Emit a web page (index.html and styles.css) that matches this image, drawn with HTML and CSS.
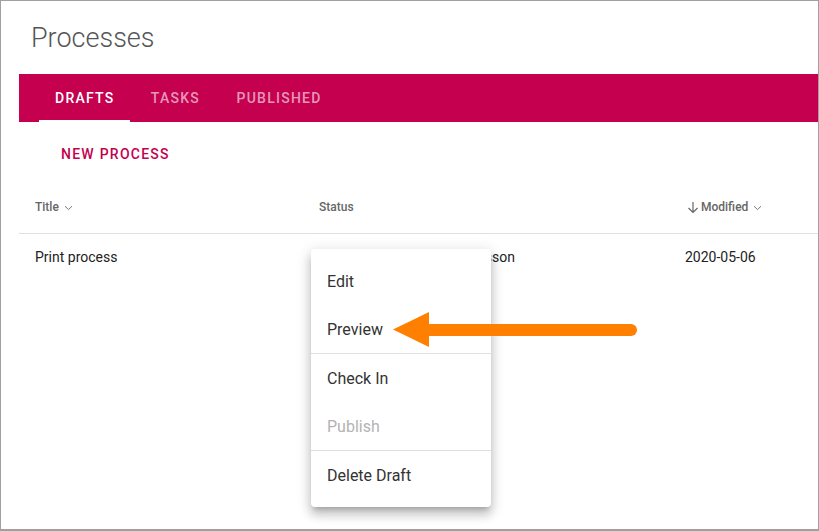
FILE: index.html
```html
<!DOCTYPE html>
<html>
<head>
<meta charset="utf-8">
<link rel="stylesheet" href="styles.css">
</head>
<body>
<div class="frame">
  <h1 class="page-title">Processes</h1>
  <nav class="tabs">
    <div class="tab active">DRAFTS</div>
    <div class="tab">TASKS</div>
    <div class="tab">PUBLISHED</div>
  </nav>
  <div class="toolbar">
    <button class="new-btn">NEW PROCESS</button>
  </div>
  <div class="table">
    <div class="row head">
      <div class="cell">Title <svg class="chev" width="9" height="6" viewBox="0 0 9 6"><path d="M1 1.2 L4.5 4.6 L8 1.2" fill="none" stroke="#777" stroke-width="1"/></svg></div>
      <div class="cell">Status</div>
      <div class="cell"></div>
      <div class="cell"></div>
      <div class="cell modified"><svg class="down" width="12" height="13" viewBox="0 0 12 13"><path d="M6 1 V11.5 M1.5 7 L6 11.5 L10.5 7" fill="none" stroke="#666" stroke-width="1.2"/></svg>Modified <svg class="chev" width="9" height="6" viewBox="0 0 9 6"><path d="M1 1.2 L4.5 4.6 L8 1.2" fill="none" stroke="#777" stroke-width="1"/></svg></div>
    </div>
    <div class="row data">
      <div class="cell">Print process</div>
      <div class="cell">Checked out</div>
      <div class="cell owner">Larsson</div>
      <div class="cell"></div>
      <div class="cell date">2020-05-06</div>
    </div>
  </div>

  <div class="menu">
    <div class="item">Edit</div>
    <div class="item">Preview</div>
    <div class="sep"></div>
    <div class="item">Check In</div>
    <div class="item disabled">Publish</div>
    <div class="sep"></div>
    <div class="item">Delete Draft</div>
  </div>

  <svg class="callout" width="270" height="60" viewBox="0 0 270 60">
    <line x1="46" y1="29" x2="250" y2="29" stroke="#ff8000" stroke-width="12" stroke-linecap="round"/>
    <polygon points="12,28.5 48,11 48,46" fill="#ff8000"/>
  </svg>
</div>
</body>
</html>
```
FILE: styles.css
```css
* { box-sizing: border-box; }
html, body { margin: 0; padding: 0; background: #fff; }
body { font-family: Roboto, "Noto Sans", Arial, sans-serif; }

.frame {
  position: relative;
  width: 819px;
  height: 531px;
  border: 1px solid #a0a0a0;
  border-bottom-width: 2px;
  padding-left: 18px;
  overflow: hidden;
  background: #fff;
}

.page-title {
  margin: 0;
  height: 73px;
  padding: 19px 0 0 12px;
  font-family: Roboto, sans-serif;
  font-size: 27px;
  line-height: 37px;
  font-weight: 300;
  color: #555;
}

.tabs {
  display: flex;
  height: 48px;
  background: #c4004f;
  padding-left: 20px;
}
.tab {
  position: relative;
  min-width: 90px;
  padding: 0 16px;
  display: flex;
  align-items: center;
  justify-content: center;
  font-size: 14px;
  font-weight: 500;
  letter-spacing: 1.25px;
  color: rgba(255,255,255,0.6);
}
.tab.active { color: #fff; }
.tab.active::after {
  content: "";
  position: absolute;
  left: 0; right: 0; bottom: 0;
  height: 2px;
  background: #fff;
}

.toolbar {
  height: 59px;
  padding: 14px 0 0 26px;
}
.new-btn {
  height: 36px;
  padding: 0 16px;
  border: 0;
  background: transparent;
  font-family: inherit;
  font-size: 14px;
  font-weight: 500;
  letter-spacing: 1.25px;
  color: #c4004f;
}

.row {
  display: grid;
  grid-template-columns: 284px 128px 84px 156px 1fr;
  align-items: center;
}
.row.head {
  height: 53px;
  border-bottom: 1px solid #e0e0e0;
  font-size: 12px;
  font-weight: 500;
  color: #666;
}
.row.data {
  height: 46px;
  font-size: 14px;
  color: #222;
}
.cell { padding-left: 16px; white-space: nowrap; display: flex; align-items: center; }
.cell.owner { padding-left: 0; justify-content: flex-end; }
.chev { margin-left: 5px; margin-top: 1px; }
.down { margin-right: 2px; }
.cell.date { padding-left: 14px; }

.menu {
  position: absolute;
  left: 310px;
  top: 248px;
  width: 180px;
  padding: 8px 0;
  background: #fff;
  border-radius: 4px;
  box-shadow: 0 5px 5px -3px rgba(0,0,0,.2), 0 8px 10px 1px rgba(0,0,0,.14), 0 3px 14px 2px rgba(0,0,0,.12);
}
.item {
  height: 48px;
  padding-left: 16px;
  display: flex;
  align-items: center;
  font-size: 16px;
  color: #333;
}
.item.disabled { color: #b3b3b3; }
.sep { height: 1px; background: #e0e0e0; }

.callout {
  position: absolute;
  left: 380px;
  top: 300px;
}
```
